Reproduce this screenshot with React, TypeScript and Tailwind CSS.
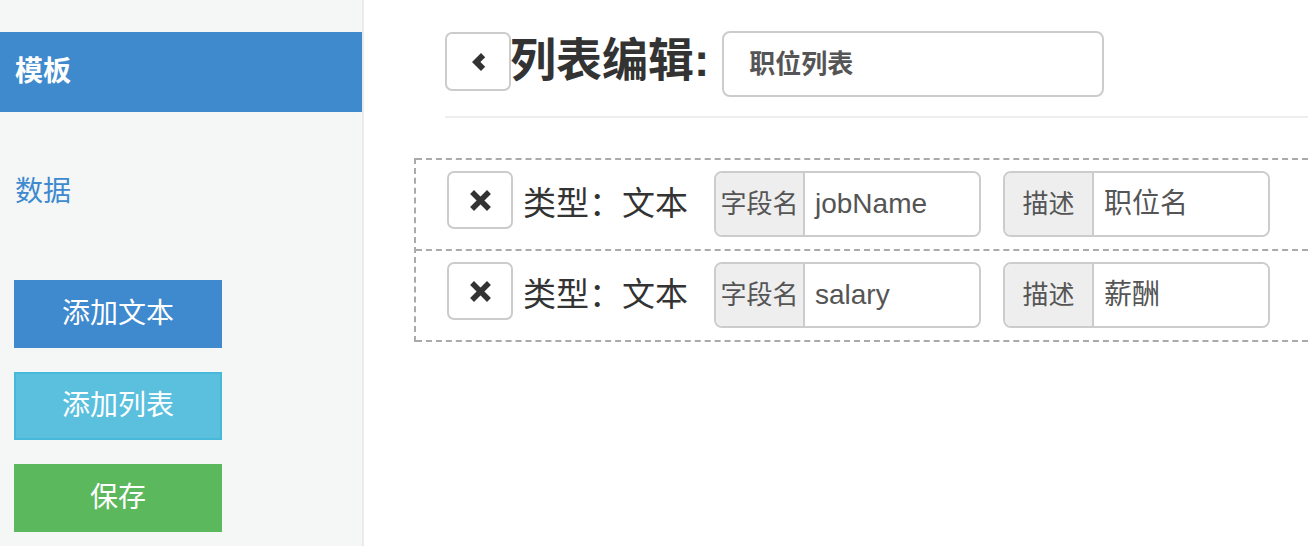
import React from "react";

const FONT = '"Liberation Sans", "Noto Sans CJK SC", sans-serif';

function XIcon() {
  return (
    <svg width="21" height="21" viewBox="0 0 21 21">
      <path d="M4 4 L17 17 M17 4 L4 17" stroke="#333" strokeWidth="5.5" strokeLinecap="square" />
    </svg>
  );
}

function ChevronLeft() {
  return (
    <svg width="20" height="24" viewBox="0 0 16 20">
      <path d="M10.5 2.5 L14 6 L10 10 L14 14 L10.5 17.5 L3 10 Z" fill="#333" />
    </svg>
  );
}

function InputGroup({ label, value, ml }: { label: string; value: string; ml: string }) {
  return (
    <div className={`flex h-[66px] w-[267px] rounded-[8px] border-2 border-[#cccccc] overflow-hidden ${ml}`}>
      <div className="w-[89px] shrink-0 bg-[#eeeeee] border-r-2 border-[#cccccc] flex items-center justify-center text-[26px] text-[#555]">
        {label}
      </div>
      <div className="flex-1 bg-white flex items-center pl-[10px] text-[28px] text-[#555]">{value}</div>
    </div>
  );
}

function Row({ name, desc, top }: { name: string; desc: string; top: boolean }) {
  return (
    <div
      className={`flex items-start pl-[31px] pt-[11px] pb-[12px] border-dashed border-[#aaaaaa] border-b-2 ${top ? "border-t-2" : ""}`}
    >
      <div className="w-[66px] h-[58px] rounded-[7px] border-2 border-[#cccccc] bg-white flex items-center justify-center">
        <XIcon />
      </div>
      <div className="ml-[10px] h-[66px] leading-[66px] text-[33px] text-[#333] whitespace-nowrap">类型：文本</div>
      <InputGroup label="字段名" value={name} ml="ml-[26px]" />
      <InputGroup label="描述" value={desc} ml="ml-[22px]" />
    </div>
  );
}

export default function App() {
  return (
    <div className="flex w-[1308px] h-[546px] overflow-hidden bg-white" style={{ fontFamily: FONT }}>
      <aside className="w-[364px] shrink-0 h-full bg-[#f5f6f6] border-r-2 border-[#ebebeb]">
        <div className="mt-[32px] h-[80px] bg-[#3e8acc] flex items-center pl-[15px] text-white text-[28px] font-bold">
          模板
        </div>
        <div className="mt-[62px] pl-[15px] text-[28px] leading-[36px] text-[#3d8acf]">数据</div>
        <div className="mt-[70px] flex flex-col gap-[24px] pl-[14px]">
          <div className="w-[208px] h-[68px] bg-[#3f89ce] text-white text-[28px] flex items-center justify-center">
            添加文本
          </div>
          <div className="w-[208px] h-[68px] bg-[#5bc0de] border-2 border-[#46b8da] text-white text-[28px] flex items-center justify-center">
            添加列表
          </div>
          <div className="w-[208px] h-[68px] bg-[#5cb85c] text-white text-[28px] flex items-center justify-center">
            保存
          </div>
        </div>
      </aside>
      <main className="flex-1 pl-[50px] pt-[31px]">
        <div className="ml-[31px]">
          <div className="flex items-start">
            <div className="mt-[1px] w-[66px] h-[59px] rounded-[7px] border-2 border-[#cccccc] bg-white flex items-center justify-center">
              <ChevronLeft />
            </div>
            <div className="-ml-[1px] h-[66px] leading-[58px] text-[46px] font-bold text-[#333] whitespace-nowrap">
              列表编辑:
            </div>
            <div className="ml-[13px] w-[382px] h-[66px] rounded-[8px] border-2 border-[#cccccc] bg-white flex items-center pl-[25px] text-[26px] font-semibold text-[#555]">
              职位列表
            </div>
          </div>
          <div className="mt-[19px] h-[2px] bg-[#eeeeee]" />
        </div>
        <div className="mt-[40px] border-l-2 border-dashed border-[#aaaaaa]">
          <Row name="jobName" desc="职位名" top={true} />
          <Row name="salary" desc="薪酬" top={false} />
        </div>
      </main>
    </div>
  );
}
